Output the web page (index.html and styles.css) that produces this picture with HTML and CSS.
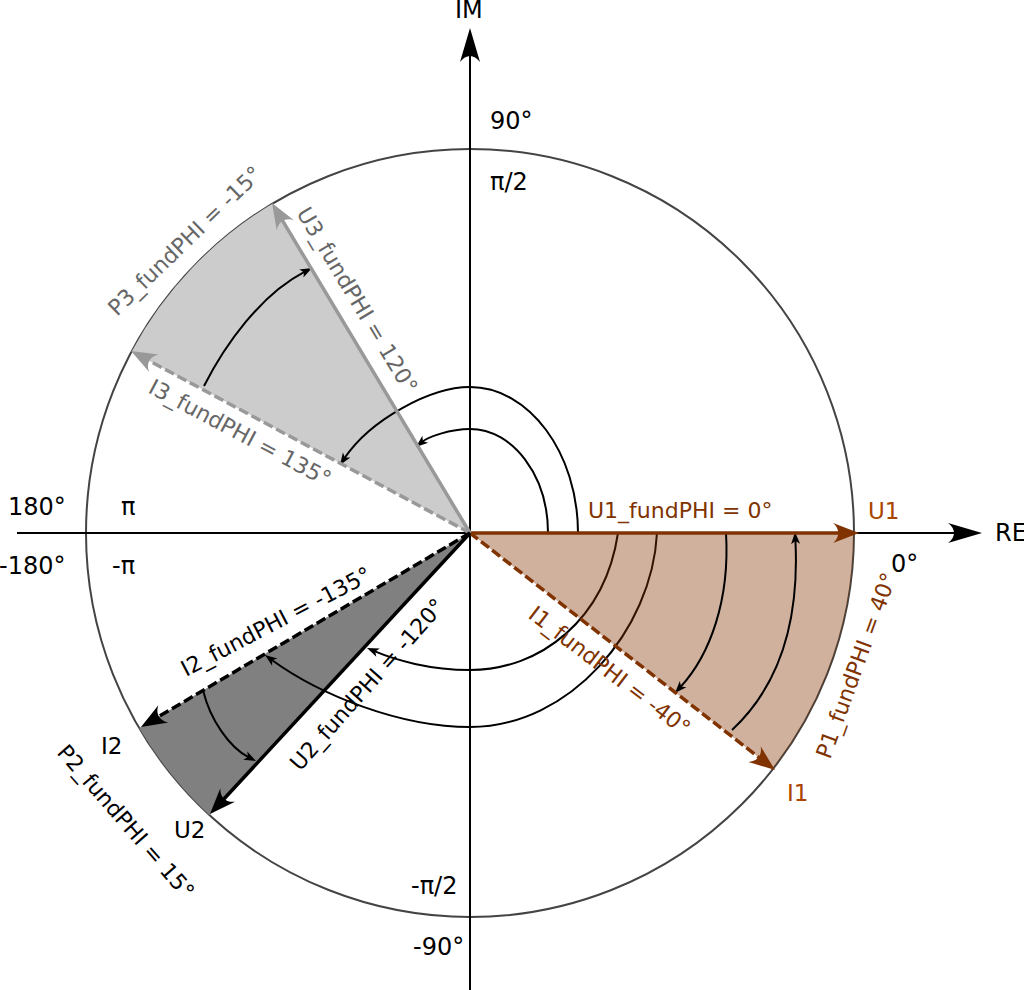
FILE: index.html
```html
<!DOCTYPE html>
<html lang="en">
<head>
<meta charset="utf-8">
<title>Phasor diagram</title>
<link rel="stylesheet" href="styles.css">
</head>
<body>
<svg class="diagram" width="1024" height="990" viewBox="0 0 1024 990" xmlns="http://www.w3.org/2000/svg">
  <!-- unit circle -->
  <circle class="circle" cx="470" cy="533" r="384"/>

  <!-- grey sectors -->
  <path class="sec3" d="M470,533 L272.4,203.7 A384,384 0 0 0 131.7,351.4 Z"/>
  <path class="sec2" d="M470,533 L139.2,728 A384,384 0 0 0 209.2,814.9 Z"/>

  <!-- axes -->
  <line class="axis" x1="17" y1="533" x2="955" y2="533"/>
  <path class="head" transform="translate(982,533)" d="M0,0 L-34,-10 C-26,-4 -26,4 -34,10 Z"/>
  <line class="axis" x1="470" y1="990" x2="470" y2="55"/>
  <path class="head" transform="translate(470,28) rotate(-90)" d="M0,0 L-34,-10 C-26,-4 -26,4 -34,10 Z"/>

  <!-- angle arcs (under the brown sector) -->
  <path class="arc" d="M618,533 C605,620 540,670 470,670 C430,670 395,660 374.4,651.2"/>
  <path class="head" transform="translate(367,648) rotate(-156.8)" d="M0,0 L-12,-4.5 L-9,0 L-12,4.5 Z"/>
  <path class="arc" d="M657,533 C652,630 570,727 470,727 C400,727 320,695 271.5,659.7"/>
  <path class="head" transform="translate(265,655) rotate(-144)" d="M0,0 L-12,-4.5 L-9,0 L-12,4.5 Z"/>

  <!-- brown sector -->
  <path class="sec1" d="M470,533 L854,533 A384,384 0 0 1 773.2,768.6 Z"/>

  <!-- other arcs -->
  <path class="arc" d="M548,533 C548,476 513,429 470,429 C450,429 428,437 422.1,441.9"/>
  <path class="head" transform="translate(416,447) rotate(140.2)" d="M0,0 L-12,-4.5 L-9,0 L-12,4.5 Z"/>
  <path class="arc" d="M578,533 C578,453 529,387 470,387 C430,387 370,420 344.4,458.3"/>
  <path class="head" transform="translate(340,465) rotate(123.7)" d="M0,0 L-12,-4.5 L-9,0 L-12,4.5 Z"/>
  <path class="arc" d="M726,533 C730,600 710,655 680.4,687.1"/>
  <path class="head" transform="translate(675,693) rotate(132.6)" d="M0,0 L-12,-4.5 L-9,0 L-12,4.5 Z"/>
  <path class="arc" d="M732,730 C775,690 800,630 795.4,540"/>
  <path class="head" transform="translate(795,532) rotate(-92.9)" d="M0,0 L-12,-4.5 L-9,0 L-12,4.5 Z"/>
  <path class="arc" d="M204,386 C225,345 260,295 304.9,271.7"/>
  <path class="head" transform="translate(312,268) rotate(-27.4)" d="M0,0 L-12,-4.5 L-9,0 L-12,4.5 Z"/>
  <path class="arc" d="M203,690 C210,720 230,748 248.8,757.4"/>
  <path class="head" transform="translate(256,761) rotate(26.6)" d="M0,0 L-12,-4.5 L-9,0 L-12,4.5 Z"/>

  <!-- vectors -->
  <line class="vec v-brown" x1="470" y1="533" x2="844" y2="533"/>
  <path class="head-brown" transform="translate(859,533)" d="M0,0 L-26,-10 C-19,-4 -19,4 -26,10 Z"/>
  <line class="vec v-brown dash" x1="470" y1="533" x2="763.2" y2="760.8"/>
  <path class="head-brown" transform="translate(775,770) rotate(37.85)" d="M0,0 L-26,-10 C-19,-4 -19,4 -26,10 Z"/>

  <line class="vec v-grey" x1="470" y1="533" x2="279.7" y2="215.9"/>
  <path class="head-grey" transform="translate(272,203) rotate(-120.96)" d="M0,0 L-26,-10 C-19,-4 -19,4 -26,10 Z"/>
  <line class="vec v-grey dash" x1="470" y1="533" x2="144.2" y2="358.1"/>
  <path class="head-grey" transform="translate(131,351) rotate(-151.77)" d="M0,0 L-26,-10 C-19,-4 -19,4 -26,10 Z"/>

  <line class="vec v-black" x1="470" y1="533" x2="220.2" y2="803"/>
  <path class="head" transform="translate(210,814) rotate(132.78)" d="M0,0 L-26,-10 C-19,-4 -19,4 -26,10 Z"/>
  <line class="vec v-black dash" x1="470" y1="533" x2="153.9" y2="719.4"/>
  <path class="head" transform="translate(141,727) rotate(149.47)" d="M0,0 L-26,-10 C-19,-4 -19,4 -26,10 Z"/>

  <!-- axis labels -->
  <text class="ax" x="455" y="18">IM</text>
  <text class="ax" x="490" y="129">90°</text>
  <text class="ax" x="490" y="190">π/2</text>
  <text class="ax" x="8" y="515">180°</text>
  <text class="ax" x="121" y="515">π</text>
  <text class="ax" x="-1" y="574">-180°</text>
  <text class="ax" x="112" y="574">-π</text>
  <text class="ax" x="995" y="541">RE</text>
  <text class="ax" x="891" y="572">0°</text>
  <text class="ax" x="411" y="894">-π/2</text>
  <text class="ax" x="413" y="955">-90°</text>

  <!-- vector names -->
  <text class="nm t-orange" x="868" y="519">U1</text>
  <text class="nm t-orange" x="787" y="801">I1</text>
  <text class="nm" x="101" y="754">I2</text>
  <text class="nm" x="174" y="838">U2</text>

  <!-- angle labels -->
  <text class="lb t-brown" x="588" y="518">U1_fundPHI = 0°</text>
  <text class="lb t-brown" transform="translate(527,617) rotate(37.5)">I1_fundPHI = -40°</text>
  <text class="lb t-brown" transform="translate(830,760) rotate(-70)">P1_fundPHI = 40°</text>
  <text class="lb t-grey" transform="translate(296,213) rotate(59)">U3_fundPHI = 120°</text>
  <text class="lb t-grey" transform="translate(147,392) rotate(28)">I3_fundPHI = 135°</text>
  <text class="lb t-grey" transform="translate(117,317) rotate(-44)">P3_fundPHI = -15°</text>
  <text class="lb" transform="translate(186,677) rotate(-27.5)">I2_fundPHI = -135°</text>
  <text class="lb" transform="translate(300,772) rotate(-48.5)">U2_fundPHI = -120°</text>
  <text class="lb" transform="translate(56,753) rotate(49)">P2_fundPHI = 15°</text>
</svg>
</body>
</html>
```
FILE: styles.css
```css
html, body {
  margin: 0;
  padding: 0;
  background: #ffffff;
}

.diagram {
  display: block;
  width: 1024px;
  height: 990px;
  overflow: hidden;
}

.circle {
  fill: none;
  stroke: #444444;
  stroke-width: 2;
}

.axis {
  stroke: #000000;
  stroke-width: 2;
}

.arc {
  fill: none;
  stroke: #000000;
  stroke-width: 2;
}

.head {
  fill: #000000;
}

.head-brown {
  fill: #803300;
}

.head-grey {
  fill: #999999;
}

.sec1 {
  fill: #803300;
  fill-opacity: 0.38;
}

.sec2 {
  fill: #808080;
}

.sec3 {
  fill: #cccccc;
}

.vec {
  stroke-width: 3.5;
  fill: none;
}

.v-brown {
  stroke: #803300;
}

.v-grey {
  stroke: #999999;
}

.v-black {
  stroke: #000000;
}

.dash {
  stroke-dasharray: 10 4;
}

.diagram text {
  font-family: "DejaVu Sans", "Liberation Sans", sans-serif;
  fill: #000000;
}

.ax {
  font-size: 24px;
}

.nm {
  font-size: 23px;
}

.lb {
  font-size: 22px;
}

.diagram .t-brown {
  fill: #803300;
}

.diagram .t-orange {
  fill: #aa4400;
}

.diagram .t-grey {
  fill: #666666;
}
```
